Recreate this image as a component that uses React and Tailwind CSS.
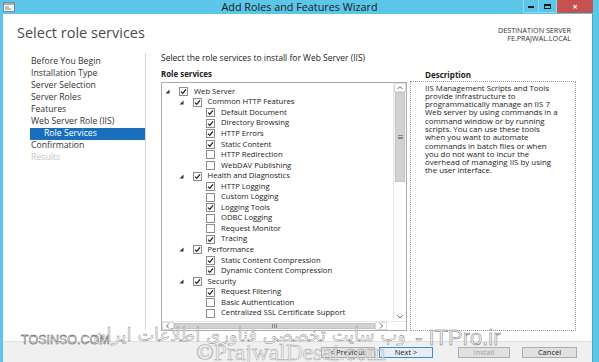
const navItems = [
  { label: "Before You Begin" },
  { label: "Installation Type" },
  { label: "Server Selection" },
  { label: "Server Roles" },
  { label: "Features" },
  { label: "Web Server Role (IIS)" },
  { label: "Role Services", active: true },
  { label: "Confirmation" },
  { label: "Results", disabled: true },
];

const tree = [
  [0, true, "Web Server", true],
  [1, true, "Common HTTP Features", true],
  [2, true, "Default Document"],
  [2, true, "Directory Browsing"],
  [2, true, "HTTP Errors"],
  [2, true, "Static Content"],
  [2, false, "HTTP Redirection"],
  [2, false, "WebDAV Publishing"],
  [1, true, "Health and Diagnostics", true],
  [2, true, "HTTP Logging"],
  [2, false, "Custom Logging"],
  [2, true, "Logging Tools"],
  [2, false, "ODBC Logging"],
  [2, false, "Request Monitor"],
  [2, true, "Tracing"],
  [1, true, "Performance", true],
  [2, true, "Static Content Compression"],
  [2, true, "Dynamic Content Compression"],
  [1, true, "Security", true],
  [2, true, "Request Filtering"],
  [2, false, "Basic Authentication"],
  [2, false, "Centralized SSL Certificate Support"],
];

const descLines = [
  "IIS Management Scripts and Tools",
  "provide infrastructure to",
  "programmatically manage an IIS 7",
  "Web server by using commands in a",
  "command window or by running",
  "scripts. You can use these tools",
  "when you want to automate",
  "commands in batch files or when",
  "you do not want to incur the",
  "overhead of managing IIS by using",
  "the user interface.",
];

const indent = ["pl-[2px]", "pl-[15.5px]", "pl-[29px]"];

const Checkbox = ({ checked }) => (
  <div className="w-[9px] h-[9px] border border-[#8c8c8c] bg-white shrink-0 flex items-center justify-center">
    {checked && (
      <svg width="7" height="7" viewBox="0 0 7 7">
        <path d="M1 3.6 L2.8 5.4 L6 1.4" fill="none" stroke="#1f1f1f" strokeWidth="1.3" />
      </svg>
    )}
  </div>
);

const Arrow = () => (
  <svg width="5" height="5" viewBox="0 0 5 5">
    <polygon points="4.5,0.5 4.5,4.5 0.5,4.5" fill="#333" />
  </svg>
);

const Chevron = ({ dir }) => {
  const d = {
    up: "M1.5 5 L4 2.5 L6.5 5",
    down: "M1.5 2.5 L4 5 L6.5 2.5",
    left: "M5 1.5 L2.5 4 L5 6.5",
    right: "M3 1.5 L5.5 4 L3 6.5",
  }[dir];
  return (
    <svg width="8" height="8" viewBox="0 0 8 8">
      <path d={d} fill="none" stroke="#666" strokeWidth="1" />
    </svg>
  );
};

const Button = ({ children, focused, disabled }) => (
  <div
    className={`h-[11px] flex items-center justify-center text-[7.5px] leading-none border ${
      focused ? "border-[#4a8ac4] bg-[#e5eef7]" : "border-[#adadad] bg-[#e1e1e1]"
    } ${disabled ? "text-[#a0a0a0]" : "text-[#222]"}`}
  >
    {children}
  </div>
);

export default function App() {
  return (
    <div className="relative w-[599px] h-[362px] overflow-hidden bg-[#5bc6e8] font-['Open_Sans',sans-serif]">
      {/* Title bar */}
      <div className="relative h-[14px] flex items-center">
        <div className="ml-[3px] w-[12px] h-[10px]">
          <svg width="12" height="10" viewBox="0 0 12 10">
            <rect x="0.5" y="0.5" width="11" height="9" fill="#f4f4f4" stroke="#7a8a96" />
            <rect x="1" y="1" width="10" height="2" fill="#9fb2c0" />
            <rect x="2" y="4.5" width="4" height="1" fill="#8a8a8a" />
            <rect x="2" y="6.5" width="6" height="1" fill="#8a8a8a" />
          </svg>
        </div>
        <div className="absolute left-0 right-0 top-0 h-[14px] flex items-center justify-center text-[10.8px] text-[#1a1a1a] pointer-events-none">
          Add Roles and Features Wizard
        </div>
        <div className="ml-auto mr-[6px] flex self-start h-[13px]">
          <div className="w-[16px] h-[13px] flex items-center justify-center bg-[#5bc6e8] border-x border-b border-[#8fdaf2]">
            <div className="w-[6px] h-[2px] bg-[#1a1a1a] mt-[2px]" />
          </div>
          <div className="w-[18px] h-[13px] flex items-center justify-center bg-[#5bc6e8] border-r border-b border-[#8fdaf2]">
            <div className="w-[7px] h-[5px] border-[1.5px] border-t-[2.5px] border-[#1a1a1a]" />
          </div>
          <div className="w-[36px] h-[13px] flex items-center justify-center bg-[#c75050] text-white text-[9px] font-bold leading-none">
            ×
          </div>
        </div>
      </div>

      {/* Window body */}
      <div className="ml-[3px] w-[590px] h-[348px] flex flex-col bg-white">
        <div className="h-[327px] flex flex-col">
          {/* Header */}
          <div className="h-[39px] flex items-start justify-between">
            <div className="ml-[14px] mt-[10px] text-[14.5px] leading-[18px] text-[#4a4a4a]">
              Select role services
            </div>
            <div className="mr-[22px] mt-[12px] text-right text-[7.2px] leading-[8px] text-[#333]">
              <div>DESTINATION SERVER</div>
              <div>FE.PRAJWAL.LOCAL</div>
            </div>
          </div>

          {/* Body */}
          <div className="flex flex-1">
            {/* Nav */}
            <div className="w-[143px] pt-[2.7px] border-r border-[#d4d4d4] mb-[-3px] h-[277px]">
              {navItems.map((n) => (
                <div
                  key={n.label}
                  className={`h-[12px] flex items-center text-[8.7px] leading-none ${
                    n.active
                      ? "ml-[27px] pl-[14px] bg-[#1a6fbd] text-white"
                      : n.disabled
                      ? "pl-[28px] text-[#c4c4c4]"
                      : "pl-[28px] text-[#333]"
                  }`}
                >
                  {n.label}
                </div>
              ))}
            </div>

            {/* Main */}
            <div className="flex-1 pl-[15px] pr-[15px]">
              <div className="h-[9px] mt-[1px] flex items-center text-[8.5px] text-[#222] leading-none whitespace-nowrap">
                Select the role services to install for Web Server (IIS)
              </div>
              <div className="flex mt-[7px] gap-[3px]">
                {/* Tree column */}
                <div className="w-[246px] flex flex-col">
                  <div className="h-[9px] flex items-center text-[7.9px] font-bold text-[#222] leading-none">
                    Role services
                  </div>
                  <div className="mt-[3px] h-[249px] border border-[#acacac] flex flex-col">
                    <div className="flex h-[238px]">
                      <div className="flex-1 pt-[3.4px] overflow-hidden">
                        {tree.map(([lvl, checked, label, arrow]) => (
                          <div
                            key={label}
                            className={`h-[10.55px] flex items-center ${indent[lvl]}`}
                          >
                            <div className="w-[15px] h-[5px] flex items-center pl-[1px]">
                              {arrow && <Arrow />}
                            </div>
                            <Checkbox checked={checked} />
                            <span className="ml-[6px] text-[7.7px] leading-none text-[#222] whitespace-nowrap">
                              {label}
                            </span>
                          </div>
                        ))}
                      </div>
                      {/* Vertical scrollbar */}
                      <div className="w-[13px] flex flex-col border-l border-[#e6e6e6] bg-[#f7f7f7]">
                        <div className="h-[9px] flex items-center justify-center border border-[#dcdcdc] bg-white">
                          <Chevron dir="up" />
                        </div>
                        <div className="mx-[1px] h-[90px] bg-[#d2d2d2] border border-[#c4c4c4] flex items-center justify-center">
                          <div className="w-[5px] h-[4px] border-y border-[#888] flex items-center">
                            <div className="w-full h-[1px] bg-[#888]" />
                          </div>
                        </div>
                        <div className="flex-1 bg-white" />
                        <div className="h-[9px] flex items-center justify-center bg-white">
                          <Chevron dir="down" />
                        </div>
                      </div>
                    </div>
                    {/* Horizontal scrollbar */}
                    <div className="flex h-[9px] border-t border-[#e6e6e6]">
                      <div className="w-[12px] flex items-center justify-center border border-[#dcdcdc] bg-white">
                        <Chevron dir="left" />
                      </div>
                      <div className="w-[201px] my-[1px] bg-[#d2d2d2] border border-[#c4c4c4] flex items-center justify-center">
                        <div className="w-[5px] h-[4px] border-x border-[#888] flex justify-center">
                          <div className="w-[1px] h-full bg-[#888]" />
                        </div>
                      </div>
                      <div className="w-[12px] flex items-center justify-center border border-[#dcdcdc] bg-white">
                        <Chevron dir="right" />
                      </div>
                      <div className="flex-1 bg-white" />
                    </div>
                  </div>
                </div>

                {/* Description column */}
                <div className="w-[166px] flex flex-col">
                  <div className="h-[9px] pl-[15px] flex items-center text-[8px] font-bold text-[#222] leading-none">
                    Description
                  </div>
                  <div className="mt-[2px] h-[250px] border border-dotted border-[#9a9a9a] pl-[14px] pt-[1.5px] text-[7.9px] leading-[8.3px] text-[#222]">
                    {descLines.map((l) => (
                      <div key={l} className="whitespace-nowrap">
                        {l}
                      </div>
                    ))}
                  </div>
                </div>
              </div>
            </div>
          </div>
        </div>

        {/* Footer */}
        <div className="flex-1 bg-[#f0f0f0] border-t border-[#dfdfdf] flex items-start pt-[5px]">
          <div className="ml-[318px] w-[54px]">
            <Button>&lt; Previous</Button>
          </div>
          <div className="ml-[4px] w-[54px]">
            <Button focused>Next &gt;</Button>
          </div>
          <div className="ml-[25px] w-[52px]">
            <Button disabled>Install</Button>
          </div>
          <div className="ml-[12px] w-[55px]">
            <Button>Cancel</Button>
          </div>
        </div>
      </div>

      {/* Watermarks over the screenshot */}
      <div className="absolute left-[21px] top-[334px] text-[12.5px] leading-none font-['Liberation_Sans',sans-serif] text-[#fafafa] [-webkit-text-stroke:0.4px_#333] pointer-events-none">
        TOSINSO.COM
      </div>
      <div
        dir="rtl"
        className="absolute left-[84px] top-[326px] w-[322px] text-[18px] leading-none font-['DejaVu_Sans',sans-serif] text-[#f2f2f2] [-webkit-text-stroke:0.35px_#666] opacity-90 whitespace-nowrap text-right pointer-events-none"
      >
        وب سایت تخصصی فناوری اطلاعات ایران
      </div>
      <div className="absolute left-[415px] top-[327px] text-[22px] leading-none font-['Liberation_Sans',sans-serif] text-[#f0f0f0] [-webkit-text-stroke:0.45px_#666] opacity-90 whitespace-nowrap pointer-events-none">
        - ITPro.ir
      </div>
      <div className="absolute left-[196px] top-[341px] text-[23.5px] leading-none font-['Liberation_Serif',serif] text-[#ececec] [-webkit-text-stroke:0.4px_#888] opacity-80 whitespace-nowrap pointer-events-none">
        ©PrajwalDesai.com
      </div>
      {/* right window edge */}
      <div className="absolute left-[592px] top-[14px] w-[1px] h-[348px] bg-[#3fa9cf]" />
    </div>
  );
}
